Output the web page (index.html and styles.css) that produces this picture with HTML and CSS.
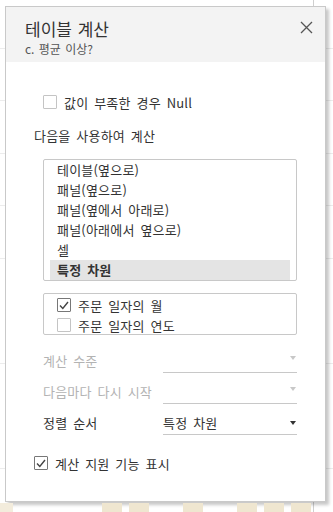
FILE: index.html
```html
<!DOCTYPE html>
<html lang="ko">
<head>
<meta charset="utf-8">
<link rel="stylesheet" href="styles.css">
</head>
<body>
<div class="dialog">
  <div class="header">
    <div class="titles">
      <div class="title">테이블 계산</div>
      <div class="subtitle">c. 평균 이상?</div>
    </div>
    <svg class="close" width="13" height="13" viewBox="0 0 13 13"><path d="M1 1 L12 12 M12 1 L1 12" stroke="#555" stroke-width="1.3" fill="none"/></svg>
  </div>
  <div class="content">
    <label class="check-row indent">
      <span class="box"></span>
      <span>값이 부족한 경우 Null</span>
    </label>
    <div class="section-label">다음을 사용하여 계산</div>
    <div class="listbox">
      <div class="item">테이블(옆으로)</div>
      <div class="item">패널(옆으로)</div>
      <div class="item">패널(옆에서 아래로)</div>
      <div class="item">패널(아래에서 옆으로)</div>
      <div class="item">셀</div>
      <div class="item selected">특정 차원</div>
    </div>
    <div class="dimbox">
      <label class="check-row">
        <span class="box checked"><svg width="10" height="9" viewBox="0 0 10 9"><path d="M1 4.5 L3.8 7.5 L9 1" stroke="#444" stroke-width="1.4" fill="none"/></svg></span>
        <span>주문 일자의 월</span>
      </label>
      <label class="check-row">
        <span class="box"></span>
        <span>주문 일자의 연도</span>
      </label>
    </div>
    <div class="field disabled">
      <span class="field-label">계산 수준</span>
      <span class="select"><span></span><span class="arrow"></span></span>
    </div>
    <div class="field disabled">
      <span class="field-label">다음마다 다시 시작</span>
      <span class="select"><span></span><span class="arrow"></span></span>
    </div>
    <div class="field">
      <span class="field-label">정렬 순서</span>
      <span class="select"><span>특정 차원</span><span class="arrow"></span></span>
    </div>
    <label class="check-row bottom">
      <span class="box checked"><svg width="10" height="9" viewBox="0 0 10 9"><path d="M1 4.5 L3.8 7.5 L9 1" stroke="#444" stroke-width="1.4" fill="none"/></svg></span>
      <span>계산 지원 기능 표시</span>
    </label>
  </div>
</div>
<div class="strip"></div>
</body>
</html>
```

FILE: styles.css
```css
html, body {
  margin: 0;
  padding: 0;
}
body {
  width: 333px;
  height: 512px;
  overflow: hidden;
  font-family: "Noto Sans CJK KR", "Noto Sans", sans-serif;
  font-size: 13px;
  color: #333;
  background-color: #fff;
  background-image:
    linear-gradient(to right, transparent 313px, #cfcfcf 313px, #cfcfcf 314px, transparent 314px),
    repeating-linear-gradient(to bottom, transparent 0, transparent 48px, #ececec 48px, #ececec 49px, transparent 49px, transparent 52.5px);
  padding-top: 6px;
  box-sizing: border-box;
}
.dialog {
  margin-left: 5px;
  width: 321px;
  height: 496px;
  box-sizing: border-box;
  border: 1px solid #c9c9c9;
  background: #fff;
  box-shadow: 3px 3px 3px rgba(0, 0, 0, 0.22);
  display: flex;
  flex-direction: column;
}
.header {
  background: #f3f3f3;
  height: 55px;
  display: flex;
  justify-content: space-between;
  align-items: flex-start;
  padding: 11px 12px 0 19px;
  box-sizing: border-box;
}
.title {
  font-size: 17px;
  line-height: 22px;
  color: #333;
  word-spacing: 1px;
}
.subtitle {
  font-size: 12px;
  line-height: 16px;
  color: #555;
  margin-top: 1px;
  word-spacing: 1px;
}
.close {
  margin-top: 3px;
}
.content {
  padding: 30px 28px 0 28px;
  display: flex;
  flex-direction: column;
  word-spacing: 2px;
  letter-spacing: 0.2px;
}
.check-row {
  display: flex;
  align-items: center;
  height: 20px;
  gap: 7px;
  white-space: nowrap;
}
.check-row.indent {
  padding-left: 9px;
}
.box {
  width: 14px;
  height: 14px;
  box-sizing: border-box;
  border: 1px solid #c4c4c4;
  border-radius: 1px;
  background: #fff;
  display: flex;
  align-items: center;
  justify-content: center;
  flex: none;
}
.box.checked {
  border-color: #777;
}
.section-label {
  height: 20px;
  line-height: 20px;
  margin-top: 14px;
}
.listbox {
  margin: 13px 0 0 9px;
  border: 1px solid #c8c8c8;
  border-radius: 2px;
  padding: 0 6px;
  display: flex;
  flex-direction: column;
}
.item {
  height: 20px;
  line-height: 20px;
  padding-left: 7px;
  white-space: nowrap;
}
.item.selected {
  background: #e4e4e4;
  font-weight: bold;
}
.dimbox {
  margin: 12px 0 0 9px;
  border: 1px solid #c8c8c8;
  border-radius: 2px;
  padding: 1px 0 0 13px;
  height: 42px;
  box-sizing: border-box;
}
.field {
  margin: 0 0 0 9px;
  display: flex;
  height: 23px;
}
.dimbox + .field {
  margin-top: 15px;
}
.field + .field {
  margin-top: 8px;
}
.field-label {
  width: 120px;
  line-height: 22px;
  white-space: nowrap;
}
.select {
  flex: 1;
  border-bottom: 1px solid #c8c8c8;
  display: flex;
  justify-content: space-between;
  align-items: center;
  line-height: 22px;
  height: 22px;
}
.arrow {
  width: 0;
  height: 0;
  border-left: 3.5px solid transparent;
  border-right: 3.5px solid transparent;
  border-top: 4px solid #333;
  margin-right: 1px;
  margin-top: -1px;
}
.field.disabled .field-label {
  color: #b3b3b3;
}
.field.disabled .arrow {
  border-top-color: #c8c8c8;
  margin-top: -7px;
}
.check-row.bottom {
  margin-top: 18px;
}
.strip {
  margin-top: 1px;
  height: 10px;
  background-image:
    linear-gradient(to right,
      #f3ecdc 0, #f3ecdc 13px, transparent 13px,
      transparent 102px, #efe6d0 102px, #efe6d0 122px, transparent 122px,
      transparent 129px, #efe6d0 129px, #efe6d0 149px, transparent 149px,
      transparent 183px, #efe6d0 183px, #efe6d0 203px, transparent 203px,
      transparent 237px, #efe6d0 237px, #efe6d0 257px, transparent 257px,
      transparent 264px, #efe6d0 264px, #efe6d0 284px, transparent 284px,
      transparent 291px, #efe6d0 291px, #efe6d0 311px, transparent 311px);
}
```
